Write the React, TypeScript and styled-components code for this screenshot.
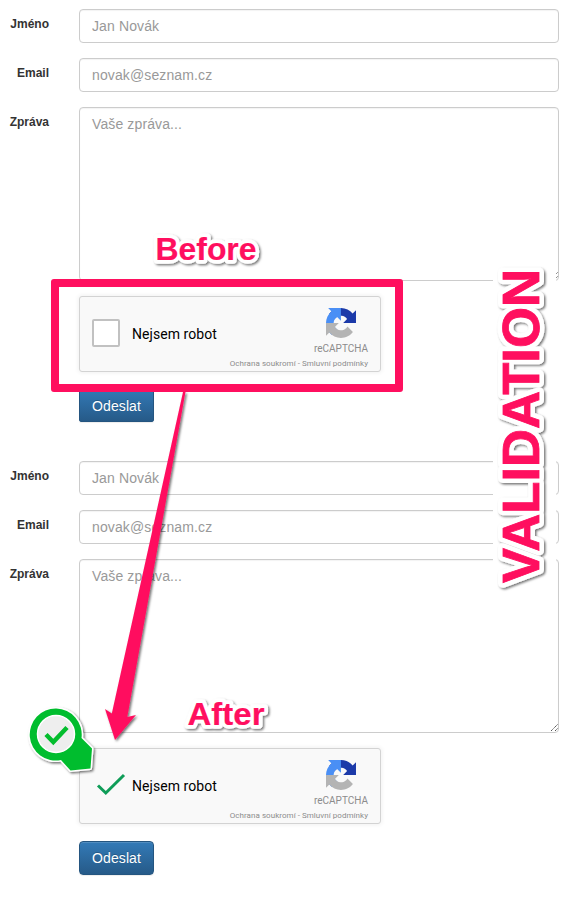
import React from "react";
import styled, { createGlobalStyle } from "styled-components";

const PINK = "#ff0f5f";

const Global = createGlobalStyle`
  *, *::before, *::after { box-sizing: border-box; }
  body { margin: 0; background: #fff; font-family: "Liberation Sans", Arial, sans-serif; }
`;

const Page = styled.main`
  position: relative;
  width: 569px;
  height: 900px;
  overflow: hidden;
  background: #fff;
  padding-top: 9px;
`;

const Form = styled.form`
  display: flex;
  flex-direction: column;
  gap: 15px;
  height: 452px;
`;

const Row = styled.div`
  display: grid;
  grid-template-columns: 49px 480px;
  column-gap: 30px;
  align-items: start;
`;

const Label = styled.label`
  padding-top: 7px;
  font-size: 12px;
  line-height: 16px;
  font-weight: 700;
  color: #333;
  text-align: right;
`;

const Input = styled.input`
  width: 100%;
  height: 34px;
  padding: 6px 12px;
  border: 1px solid #ccc;
  border-radius: 4px;
  box-shadow: inset 0 1px 1px rgba(0, 0, 0, 0.05);
  font: 14px/20px "Liberation Sans", Arial, sans-serif;
  letter-spacing: 0.12px;
  background: #fff;
  &::placeholder { color: #999; opacity: 1; }
`;

const Area = styled(Input).attrs({ as: "textarea" })`
  display: block;
  height: 174px;
  resize: none;
`;

const AreaWrap = styled.div`
  position: relative;
`;

const Grip = styled.svg`
  position: absolute;
  right: 0;
  bottom: 1px;
`;

const Captcha = styled.div`
  grid-column: 2;
  display: flex;
  align-items: flex-start;
  width: 302px;
  height: 76px;
  padding: 0 12px;
  border: 1px solid #d3d3d3;
  border-radius: 3px;
  background: #f9f9f9;
  box-shadow: 0 0 4px 1px rgba(0, 0, 0, 0.06);
`;

const Box = styled.span`
  flex: none;
  width: 28px;
  height: 28px;
  margin-top: 22px;
  border: 2px solid #c1c1c1;
  border-radius: 2px;
  background: #fff;
`;

const Tick = styled.svg`
  flex: none;
  width: 28px;
  height: 28px;
  margin-top: 22px;
  overflow: visible;
`;

const Robot = styled.span`
  margin: 29px 0 0 12px;
  font: 14px/17px Roboto, sans-serif;
  letter-spacing: 0.06px;
  color: #000;
  white-space: nowrap;
`;

const Brand = styled.div`
  display: flex;
  flex-direction: column;
  align-items: flex-end;
  margin-left: auto;
  height: 74px;
  padding-top: 11px;
  color: #8c8c8c;
  font-family: Roboto, sans-serif;
  white-space: nowrap;
`;

const Logo = styled.svg`
  margin-right: 12px;
`;

const BrandName = styled.span`
  margin-top: 5px;
  font-size: 10px;
  line-height: 12px;
`;

const Legal = styled.span`
  margin-top: 4px;
  font-size: 8px;
  line-height: 10px;
  letter-spacing: 0.05px;
`;

const Submit = styled.button<{ $offset: number }>`
  grid-column: 2;
  justify-self: start;
  width: 75px;
  height: 34px;
  margin-top: ${(p) => p.$offset}px;
  padding: 0;
  border: 1px solid #245580;
  border-radius: ${(p) => (p.$offset > 1 ? 4 : 2)}px;
  background: linear-gradient(to bottom, #337ab7, #265a88);
  box-shadow: inset 0 1px 0 rgba(255, 255, 255, 0.15), 0 1px 1px rgba(0, 0, 0, 0.075);
  color: #fff;
  font: 14px/20px "Liberation Sans", Arial, sans-serif;
  letter-spacing: 0.1px;
  text-shadow: 0 -1px 0 rgba(0, 0, 0, 0.2);
`;

const SubmitText = styled.span<{ $drop: number }>`
  display: block;
  padding-top: ${(p) => p.$drop}px;
`;

const Frame = styled.div`
  position: absolute;
  left: 51px;
  top: 279px;
  width: 352px;
  height: 113px;
  border: 8px solid ${PINK};
  border-radius: 3px;
`;

const Markup = styled.svg`
  position: absolute;
  inset: 0;
  pointer-events: none;
`;

const Halo = styled.text`
  font-family: "Liberation Sans", Arial, sans-serif;
  font-weight: 700;
  fill: #fff;
  stroke: #fff;
  stroke-linejoin: round;
`;

const Caption = styled(Halo)`
  fill: ${PINK};
  stroke: ${PINK};
  stroke-linejoin: miter;
`;

interface OutlinedProps {
  transform: string;
  size: number;
  length: number;
  halo: number;
  weight: number;
  children: string;
}

function Outlined({ transform, size, length, halo, weight, children }: OutlinedProps) {
  const shape = {
    transform,
    fontSize: size,
    textLength: length,
    lengthAdjust: "spacingAndGlyphs" as const,
  };
  return (
    <>
      <g filter="url(#shade)">
        <Halo {...shape} strokeWidth={halo}>{children}</Halo>
      </g>
      <Caption {...shape} strokeWidth={weight}>{children}</Caption>
    </>
  );
}

function RecaptchaLogo() {
  return (
    <Logo width="30" height="30" viewBox="0 0 64 64">
      <path
        fill="#1c3aa9"
        d="M64 31.955l-.033-1.37V4.687l-7.16 7.16C50.948 4.674 42.033.093 32.05.093c-10.4 0-19.622 4.96-25.458 12.64l11.736 11.86a15.55 15.55 0 0 1 4.754-5.334c2.05-1.6 4.952-2.906 8.968-2.906.485 0 .86.057 1.135.163 4.976.393 9.288 3.14 11.828 7.124l-8.307 8.307L64 31.953"
      />
      <path
        fill="#4a8ff5"
        d="M31.862.094l-1.37.033H4.594l7.16 7.16C4.58 13.147 0 22.06 0 32.046c0 10.4 4.96 19.622 12.64 25.458L24.5 45.768a15.55 15.55 0 0 1-5.334-4.754c-1.6-2.05-2.906-4.952-2.906-8.968 0-.485.057-.86.163-1.135.393-4.976 3.14-9.288 7.124-11.828l8.307 8.307L31.86.095"
      />
      <path
        fill="#b4b4b4"
        d="M.001 32.045l.033 1.37v25.898l7.16-7.16c5.86 7.173 14.774 11.754 24.76 11.754 10.4 0 19.622-4.96 25.458-12.64l-11.736-11.86a15.55 15.55 0 0 1-4.754 5.334c-2.05 1.6-4.952 2.906-8.968 2.906-.485 0-.86-.057-1.135-.163-4.976-.393-9.288-3.14-11.828-7.124l8.307-8.307c-10.522.04-22.4.066-27.295-.005"
      />
    </Logo>
  );
}

function ContactForm({ checked = false }: { checked?: boolean }) {
  return (
    <Form onSubmit={(event) => event.preventDefault()}>
      <Row>
        <Label>Jméno</Label>
        <Input placeholder="Jan Novák" />
      </Row>
      <Row>
        <Label>Email</Label>
        <Input placeholder="novak@seznam.cz" />
      </Row>
      <Row>
        <Label>Zpráva</Label>
        <AreaWrap>
          <Area placeholder="Vaše zpráva..." />
          <Grip width="9" height="9" viewBox="0 0 9 9">
            <path d="M1 8L8 1M5 8L8 5" stroke="#555" strokeWidth="1" strokeDasharray="1.4 .5" />
          </Grip>
        </AreaWrap>
      </Row>
      <Row>
        <Captcha>
          {checked ? (
            <Tick viewBox="0 0 28 28" fill="none">
              <path d="M6 14.5L13.8 22L32 4" stroke="#0f9d58" strokeWidth="3" />
            </Tick>
          ) : (
            <Box />
          )}
          <Robot>Nejsem robot</Robot>
          <Brand>
            <RecaptchaLogo />
            <BrandName>reCAPTCHA</BrandName>
            <Legal>Ochrana soukromí - Smluvní podmínky</Legal>
          </Brand>
        </Captcha>
      </Row>
      <Row>
        <Submit $offset={checked ? 2 : 1}>
          <SubmitText $drop={checked ? 0 : 2}>Odeslat</SubmitText>
        </Submit>
      </Row>
    </Form>
  );
}

function Annotations() {
  return (
    <Markup width="569" height="900" viewBox="0 0 569 900">
      <defs>
        <filter id="shade" filterUnits="userSpaceOnUse" x="0" y="0" width="569" height="900">
          <feDropShadow dx="1.5" dy="1.5" stdDeviation="1.2" floodColor="#000" floodOpacity="0.55" />
        </filter>
      </defs>
      <path
        filter="url(#shade)"
        fill={PINK}
        d="M183 392H185.5L127.3 717L136 715L115 740L105 709L111.8 713.5Z"
      />
      <Outlined transform="translate(155.5 260)" size={31.5} length={101} halo={7.5} weight={0.2}>
        Before
      </Outlined>
      <Outlined transform="translate(187.5 725)" size={31.5} length={77} halo={7.5} weight={0.2}>
        After
      </Outlined>
      <rect x="493" y="264" width="63" height="324" fill="#fff" />
      <Outlined transform="translate(539 583) rotate(-90)" size={52} length={314} halo={10} weight={0.8}>
        VALIDATION
      </Outlined>
      <path
        filter="url(#shade)"
        d="M81.5 738L92 748.5L90.5 768.5L70.5 770.5L61 760A26 26 0 1 1 81.5 738Z"
        fill="#03bd2d"
        stroke="#fff"
        strokeWidth="3"
        strokeLinejoin="round"
        paintOrder="stroke"
      />
      <circle cx="56" cy="734" r="18.5" fill="#eee" stroke="#fff" strokeWidth="1.5" />
      <path d="M46 734.5L53.3 742L67 727.5" fill="none" stroke="#03bd2d" strokeWidth="4.5" />
    </Markup>
  );
}

export default function App() {
  return (
    <>
      <Global />
      <Page>
        <ContactForm />
        <ContactForm checked />
        <Frame />
        <Annotations />
      </Page>
    </>
  );
}
